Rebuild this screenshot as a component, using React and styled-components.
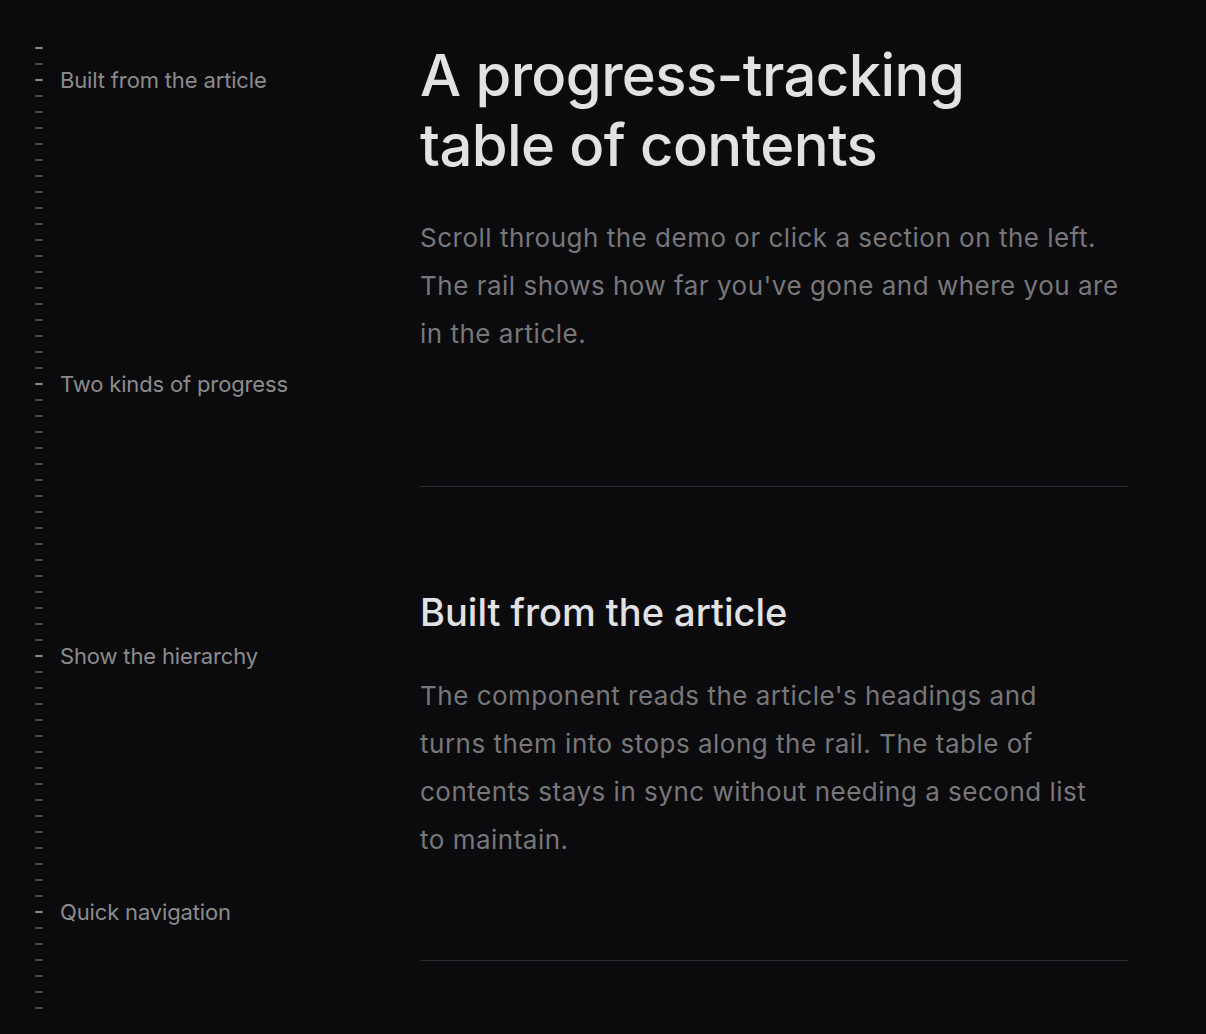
import React from 'react';
import styled, {createGlobalStyle} from "styled-components";

const GlobalStyle = createGlobalStyle`
    html, body {
        margin: 0;
        padding: 0;
        background: #0b0b0d;
        overflow: hidden;
    }
    body {
        font-family: Inter, "Noto Sans", "Liberation Sans", sans-serif;
        -webkit-font-smoothing: antialiased;
    }
`

// tick index -> label; ticks sit every 16px down the rail
const labels = {
    2: "Built from the article",
    21: "Two kinds of progress",
    38: "Show the hierarchy",
    54: "Quick navigation",
};

const TICK_COUNT = 61;

const App = () => {
    const ticks = [];
    for (let i = 0; i < TICK_COUNT; i++) {
        ticks.push(i);
    }

    return (
        <Page>
            <GlobalStyle />
            <Rail>
                {ticks.map((i) => (
                    <TickRow key={i}>
                        <Tick major={!!labels[i] || i === 0} />
                        {labels[i] && <RailLabel>{labels[i]}</RailLabel>}
                    </TickRow>
                ))}
            </Rail>
            <Article>
                <Hero>
                    <Title>A progress-tracking<br />table of contents</Title>
                    <Lead>
                        Scroll through the demo or click a section on the left.
                        The rail shows how far you've gone and where you are
                        in the article.
                    </Lead>
                </Hero>
                <Divider />
                <Section>
                    <SectionTitle>Built from the article</SectionTitle>
                    <Body>
                        The component reads the article's headings and
                        turns them into stops along the rail. The table of
                        contents stays in sync without needing a second list
                        to maintain.
                    </Body>
                </Section>
                <Divider />
            </Article>
        </Page>
    )
}

const Page = styled.div`
    display: grid;
    grid-template-columns: 420px 708px;
    min-height: 1034px;
`

const Rail = styled.nav`
    display: flex;
    flex-direction: column;
    padding: 40px 0 0 35px;
`

const TickRow = styled.div`
    height: 16px;
    display: flex;
    align-items: center;
    gap: 17px;
    white-space: nowrap;
`

const Tick = styled.span`
    width: 8px;
    height: 2px;
    border-radius: 1px;
    background: ${props => props.major ? "#8a8a8c" : "#4a4a4e"};
    flex-shrink: 0;
`

const RailLabel = styled.span`
    font-size: 22px;
    line-height: 16px;
    color: #8b8b8d;
    letter-spacing: -0.15px;
`

const Article = styled.main`
    display: flex;
    flex-direction: column;
    padding-top: 40px;
`

const Hero = styled.header`
    display: flex;
    flex-direction: column;
    gap: 34px;
    padding-bottom: 128px;
`

const Title = styled.h1`
    margin: 0;
    font-size: 58px;
    line-height: 70px;
    font-weight: 500;
    letter-spacing: -0.6px;
    color: #e2e2e4;
`

const Lead = styled.p`
    margin: 0;
    font-size: 26px;
    line-height: 48px;
    color: #77777a;
    letter-spacing: 0.5px;
`

const Divider = styled.hr`
    margin: 0;
    border: none;
    height: 1px;
    background: #2a2a2e;
`

const Section = styled.section`
    display: flex;
    flex-direction: column;
    gap: 38px;
    padding: 103px 0 96px;
`

const SectionTitle = styled.h2`
    margin: 0;
    font-size: 38px;
    line-height: 44px;
    font-weight: 500;
    letter-spacing: 0;
    color: #e2e2e4;
`

const Body = styled(Lead)`
    max-width: 680px;
`

export default App;
